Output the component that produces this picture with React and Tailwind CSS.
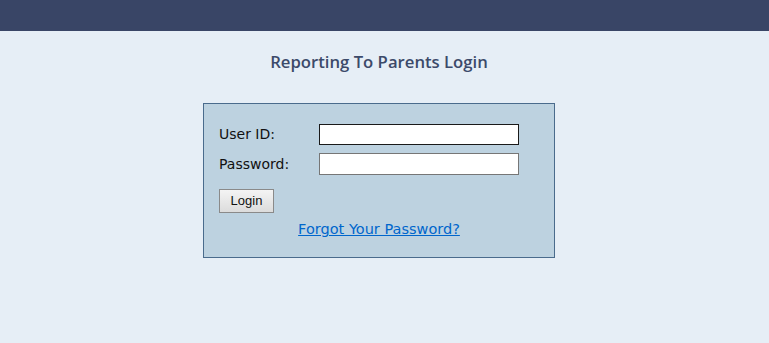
import React from "react";

export default function App() {
	return (
		<div className="min-h-[343px] w-full bg-[#e6eef6] font-['DejaVu_Sans',sans-serif]">
			<div className="h-[31px] bg-[#394566]" />
			<div className="w-[758px]">
				<h1 className="mt-[20px] text-center font-['Open_Sans',sans-serif] text-[16.7px] font-semibold leading-[22px] text-[#3c4a6a]">
					Reporting To Parents Login
				</h1>
				<div className="mx-auto mt-[30px] h-[155px] w-[352px] border border-[#4a6b8c] bg-[#bdd2e0] px-[15px] pt-[20px]">
					<div className="flex h-[21px] items-center">
						<label className="w-[100px] text-[14px] text-[#111]">User ID:</label>
						<input
							type="text"
							className="h-[21px] w-[200px] border border-[#1a1a1a] bg-white px-1 text-[13px] outline-none"
						/>
					</div>
					<div className="mt-[8px] flex h-[22px] items-center">
						<label className="w-[100px] text-[14px] text-[#111]">Password:</label>
						<input
							type="password"
							className="h-[22px] w-[200px] border border-[#767676] bg-white px-1 text-[13px] outline-none"
						/>
					</div>
					<button className="mt-[14px] h-[24px] w-[55px] border border-[#8a8a8a] bg-gradient-to-b from-[#f4f4f4] to-[#dcdcdc] font-['Liberation_Sans',sans-serif] text-[13px] text-[#111]">
						Login
					</button>
					<div className="mt-[4px] text-center">
						<a href="#" className="text-[14.5px] text-[#0066cc] underline">
							Forgot Your Password?
						</a>
					</div>
				</div>
			</div>
		</div>
	);
}
